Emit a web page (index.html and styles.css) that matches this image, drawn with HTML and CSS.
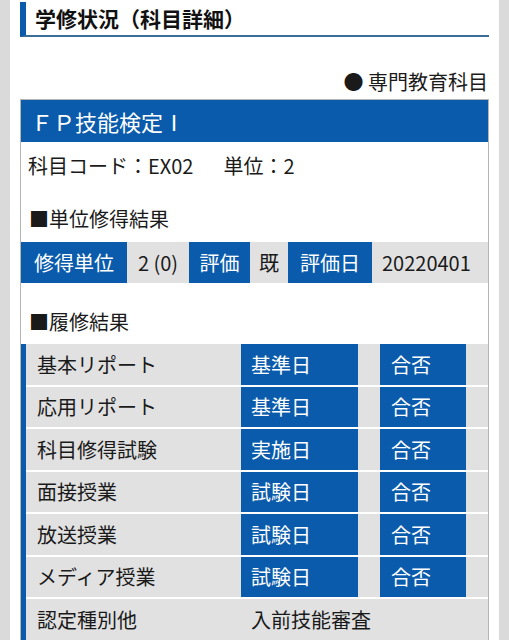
FILE: index.html
```html
<!DOCTYPE html>
<html lang="ja">
<head>
<meta charset="utf-8">
<title>学修状況（科目詳細）</title>
<link rel="stylesheet" href="styles.css">
</head>
<body>
<div class="sheet">
  <h1 class="title">学修状況（科目詳細）</h1>
  <p class="category">● 専門教育科目</p>
  <div class="card">
    <div class="card-head">ＦＰ技能検定Ⅰ</div>
    <p class="meta">科目コード：EX02<span class="gap"></span>単位：2</p>
    <p class="section">■単位修得結果</p>
    <div class="unit-row">
      <span class="lab w1">修得単位</span>
      <span class="val w2">2 (0)</span>
      <span class="lab w3">評価</span>
      <span class="val w4">既</span>
      <span class="lab w5">評価日</span>
      <span class="val w6">20220401</span>
    </div>
    <p class="section">■履修結果</p>
    <div class="results">
      <div class="row"><span class="name">基本リポート</span><span class="k1">基準日</span><span class="sp"></span><span class="k2">合否</span></div>
      <div class="row"><span class="name">応用リポート</span><span class="k1">基準日</span><span class="sp"></span><span class="k2">合否</span></div>
      <div class="row"><span class="name">科目修得試験</span><span class="k1">実施日</span><span class="sp"></span><span class="k2">合否</span></div>
      <div class="row"><span class="name">面接授業</span><span class="k1">試験日</span><span class="sp"></span><span class="k2">合否</span></div>
      <div class="row"><span class="name">放送授業</span><span class="k1">試験日</span><span class="sp"></span><span class="k2">合否</span></div>
      <div class="row"><span class="name">メディア授業</span><span class="k1">試験日</span><span class="sp"></span><span class="k2">合否</span></div>
      <div class="row"><span class="name">認定種別他</span><span class="plain">入前技能審査</span></div>
    </div>
  </div>
</div>
</body>
</html>
```

FILE: styles.css
```css
html, body {
  margin: 0;
  padding: 0;
  background: #dadada;
  height: 640px;
  overflow: hidden;
}
body {
  font-family: "Noto Sans CJK JP", "Noto Sans", sans-serif;
  color: #1a1a1a;
  font-size: 20px;
}
.sheet {
  background: #ffffff;
  margin: 0 10px;
  padding: 2px 10px 0;
  height: 638px;
}
.title {
  margin: 0;
  height: 33px;
  line-height: 33px;
  font-size: 21px;
  font-weight: 700;
  border-left: 6px solid #0a5bab;
  border-bottom: 2px solid #3b6d99;
  padding-left: 9px;
  color: #111;
}
.category {
  margin: 30px 0 2px;
  line-height: 30px;
  text-align: right;
  padding-right: 1px;
}
.card {
  border: 1px solid #b5b5b5;
  border-bottom: none;
}
.card-head {
  background: #0a5bab;
  color: #fff;
  height: 42px;
  line-height: 42px;
  font-size: 22px;
  padding-left: 10px;
}
.meta {
  margin: 9px 0 0;
  line-height: 30px;
  padding-left: 7px;
}
.gap {
  display: inline-block;
  width: 30px;
}
.section {
  margin: 23px 0 8px;
  line-height: 30px;
  padding-left: 8px;
}
.unit-row + .section {
  margin-top: 24px;
  margin-bottom: 7px;
}
.unit-row {
  display: flex;
  height: 41px;
  background: #e1e1e1;
}
.unit-row span {
  display: flex;
  align-items: center;
  justify-content: center;
}
.lab {
  background: #0a5bab;
  color: #fff;
}
.w1 { width: 106px; }
.w2 { width: 62px; }
.w3 { width: 61px; }
.w4 { width: 38px; }
.w5 { width: 84px; }
.w6 { flex: 1; justify-content: flex-start !important; padding-left: 10px; }
.results {
  border-left: 5px solid #0a5bab;
  display: flex;
  flex-direction: column;
  gap: 2px;
}
.row {
  display: flex;
  height: 40.5px;
  background: #e1e1e1;
}
.row span {
  display: flex;
  align-items: center;
}
.name {
  width: 204px;
  padding-left: 11px;
}
.k1 {
  width: 107px;
  padding-left: 10px;
  background: #0a5bab;
  color: #fff;
}
.sp {
  width: 22px;
}
.k2 {
  width: 75px;
  padding-left: 11px;
  background: #0a5bab;
  color: #fff;
}
.plain {
  padding-left: 10px;
}
```
